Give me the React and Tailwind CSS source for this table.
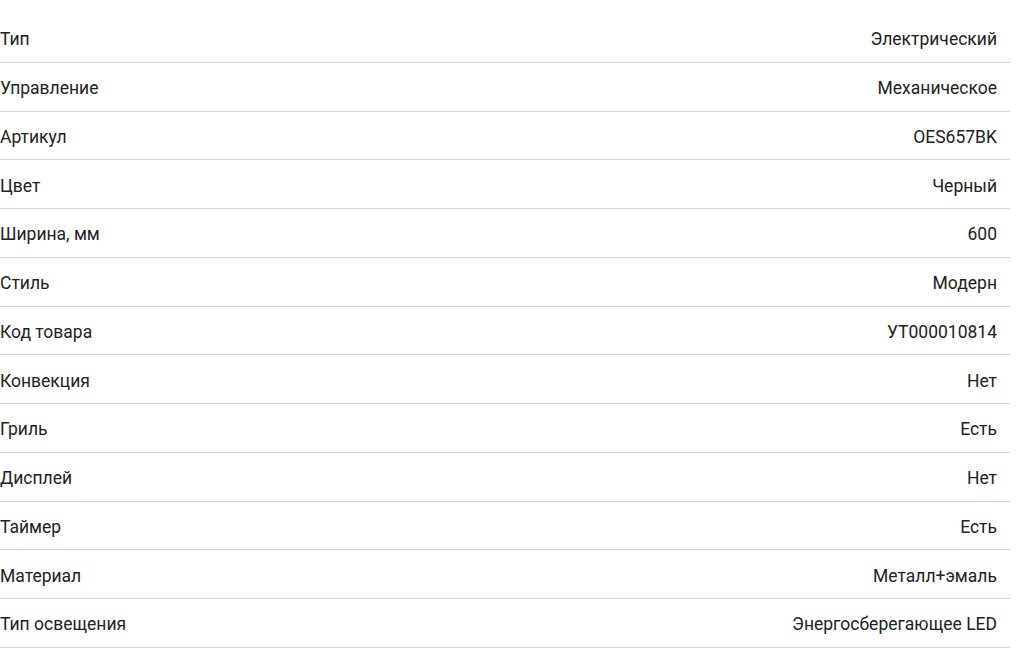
const specs = [
  ['Тип', 'Электрический'],
  ['Управление', 'Механическое'],
  ['Артикул', 'OES657BK'],
  ['Цвет', 'Черный'],
  ['Ширина, мм', '600'],
  ['Стиль', 'Модерн'],
  ['Код товара', 'УТ000010814'],
  ['Конвекция', 'Нет'],
  ['Гриль', 'Есть'],
  ['Дисплей', 'Нет'],
  ['Таймер', 'Есть'],
  ['Материал', 'Металл+эмаль'],
  ['Тип освещения', 'Энергосберегающее LED'],
];

export default function App() {
  return (
    <div className="min-h-screen bg-white font-['Roboto',sans-serif] text-[17.5px] text-[#222]">
      <div className="w-[1010px] pt-[14px]">
        {specs.map(([name, value]) => (
          <div
            key={name}
            className="flex h-[48.75px] items-center justify-between border-b border-[#d4d4d4] pt-[3px] pr-[13px]"
          >
            <span>{name}</span>
            <span>{value}</span>
          </div>
        ))}
      </div>
    </div>
  );
}
